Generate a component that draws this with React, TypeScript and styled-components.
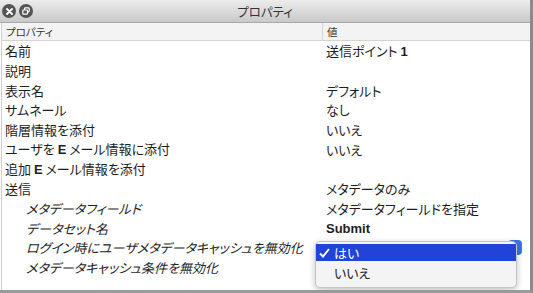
import React from "react";
import styled, { createGlobalStyle } from "styled-components";

const Global = createGlobalStyle`
  html, body { margin: 0; padding: 0; background: #c86a2a; }
  body { width: 533px; height: 293px; overflow: hidden; }
`;

const Window = styled.div`
  position: relative;
  width: 530px;
  height: 290px;
  background: #ffffff;
  border-right: 3px solid #8a8a8a;
  border-bottom: 3px solid #9a9a9a;
  display: flex;
  flex-direction: column;
  font-family: "Noto Sans CJK JP", "Liberation Sans", sans-serif;
  font-feature-settings: "palt";
  color: #1e1e1e;
  overflow: hidden;
`;

const TitleBar = styled.div`
  height: 22px;
  flex: none;
  background: linear-gradient(#ececec, #c9c9c9);
  border-bottom: 1px solid #a8a8a8;
  display: flex;
  align-items: center;
  padding-left: 2px;
  gap: 3px;
  position: relative;
`;

const Title = styled.div`
  position: absolute;
  left: 0;
  right: 0;
  top: 0;
  bottom: 0;
  display: flex;
  align-items: center;
  justify-content: center;
  font-size: 12.5px;
  color: #333;
  pointer-events: none;
`;

const Circle = styled.div`
  width: 14px;
  height: 14px;
  border-radius: 50%;
  background: #555;
  display: flex;
  align-items: center;
  justify-content: center;
`;

const Body = styled.div`
  flex: 1;
  display: flex;
  flex-direction: column;
  border-left: 1px solid #cfcfcf;
  margin-left: 1px;
`;

const HeaderRow = styled.div`
  height: 17px;
  display: grid;
  grid-template-columns: 320px 1fr;
  background: #f3f3f3;
  border-bottom: 1px solid #d4d4d4;
  font-size: 10.5px;
  color: #333;
  align-items: center;
`;

const HeadCell = styled.div<{ $sep?: boolean }>`
  padding-left: 4px;
  border-left: ${(p) => (p.$sep ? "1px solid #d6d6d6" : "none")};
  height: 100%;
  display: flex;
  align-items: center;
`;

const Row = styled.div`
  height: 19.7px;
  display: grid;
  grid-template-columns: 321px 1fr;
  align-items: center;
  font-size: 13px;
  line-height: 1;
`;

const Label = styled.div<{ $sub?: boolean }>`
  padding-left: ${(p) => (p.$sub ? "24px" : "3px")};
  font-style: ${(p) => (p.$sub ? "italic" : "normal")};
  white-space: nowrap;
`;

const Value = styled.div`
  padding-left: 3px;
  white-space: nowrap;
`;

const B = styled.b`
  font-family: "Liberation Sans", sans-serif;
  font-weight: 700;
`;

const Popup = styled.div`
  position: absolute;
  left: 315px;
  top: 241px;
  width: 202px;
  height: 47px;
  background: #f4f4f4;
  border: 1px solid #c4c4c4;
  border-radius: 5px;
  box-shadow: 0 2px 6px rgba(0, 0, 0, 0.25);
  padding-top: 2px;
  box-sizing: border-box;
  font-size: 13px;
  z-index: 2;
`;

const Option = styled.div<{ $sel?: boolean }>`
  height: 17px;
  display: flex;
  align-items: center;
  background: ${(p) => (p.$sel ? "#2143d8" : "transparent")};
  color: ${(p) => (p.$sel ? "#ffffff" : "#222")};
  padding-left: 3px;
  gap: 4px;
  margin-bottom: 3px;
`;

const Check = styled.span`
  width: 11px;
  display: inline-flex;
`;

const Stepper = styled.div`
  position: absolute;
  left: 508px;
  top: 240px;
  width: 14px;
  height: 15px;
  border-radius: 4px;
  background: #3b73e6;
  display: flex;
  align-items: center;
  justify-content: center;
  z-index: 1;
`;

const rows: { l: React.ReactNode; v?: React.ReactNode; sub?: boolean }[] = [
  { l: "名前", v: <>送信ポイント <B>1</B></> },
  { l: "説明" },
  { l: "表示名", v: "デフォルト" },
  { l: "サムネール", v: "なし" },
  { l: "階層情報を添付", v: "いいえ" },
  { l: <>ユーザを <B>E</B> メール情報に添付</>, v: "いいえ" },
  { l: <>追加 <B>E</B> メール情報を添付</> },
  { l: "送信", v: "メタデータのみ" },
  { l: "メタデータフィールド", v: "メタデータフィールドを指定", sub: true },
  { l: "データセット名", v: <B>Submit</B>, sub: true },
  { l: "ログイン時にユーザメタデータキャッシュを無効化", sub: true },
  { l: "メタデータキャッシュ条件を無効化", sub: true },
];

export default function App() {
  return (
    <>
      <Global />
      <Window>
        <TitleBar>
          <Circle>
            <svg width="7" height="7" viewBox="0 0 7 7">
              <path d="M1 1L6 6M6 1L1 6" stroke="#fff" strokeWidth="1.8" strokeLinecap="round" />
            </svg>
          </Circle>
          <Circle>
            <svg width="8" height="8" viewBox="0 0 8 8">
              <rect x="2.5" y="0.8" width="4.7" height="4" rx="0.8" fill="none" stroke="#fff" strokeWidth="1.2" />
              <rect x="0.8" y="3" width="4.7" height="4.2" rx="0.8" fill="#555" stroke="#fff" strokeWidth="1.2" />
            </svg>
          </Circle>
          <Title>プロパティ</Title>
        </TitleBar>
        <Body>
          <HeaderRow>
            <HeadCell>プロパティ</HeadCell>
            <HeadCell $sep>値</HeadCell>
          </HeaderRow>
          {rows.map((r, i) => (
            <Row key={i}>
              <Label $sub={r.sub}>{r.l}</Label>
              <Value>{r.v}</Value>
            </Row>
          ))}
        </Body>
        <Stepper>
          <svg width="6" height="10" viewBox="0 0 6 10">
            <path d="M1 4L3 2L5 4M1 6L3 8L5 6" stroke="#fff" strokeWidth="1.2" fill="none" />
          </svg>
        </Stepper>
        <Popup>
          <Option $sel>
            <Check>
              <svg width="11" height="10" viewBox="0 0 11 10">
                <path d="M1 5.5L4 8.5L10 1" stroke="#fff" strokeWidth="2" fill="none" />
              </svg>
            </Check>
            はい
          </Option>
          <Option>
            <Check />
            いいえ
          </Option>
        </Popup>
      </Window>
    </>
  );
}
